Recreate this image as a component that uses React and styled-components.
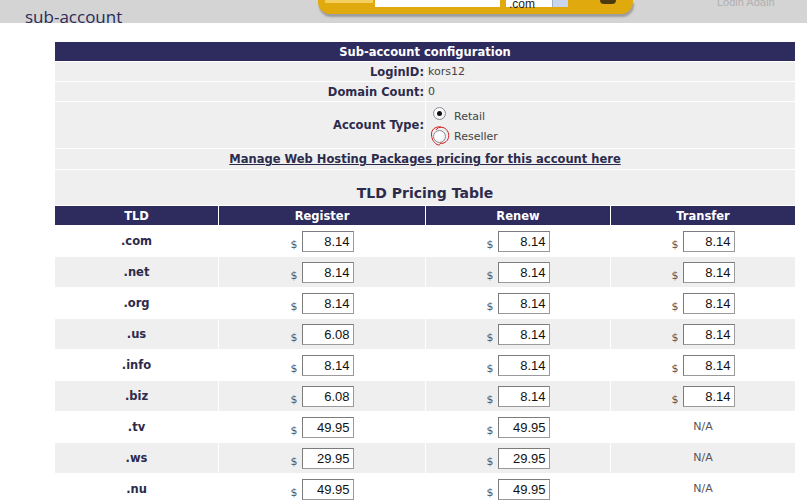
import React from "react";
import styled, { createGlobalStyle } from "styled-components";

const GlobalStyle = createGlobalStyle`
  html, body {
    margin: 0;
    padding: 0;
    overflow: hidden;
    background: #ffffff;
  }
  body {
    font-family: "DejaVu Sans", Verdana, sans-serif;
  }
`;

const TopBar = styled.div`
  height: 23px;
  background: #d4d4d4;
  display: grid;
  grid-template-columns: 318px 315px 1fr;
  align-items: start;
`;

const PageTitle = styled.div`
  padding-left: 25px;
  height: 23px;
  font-family: "Open Sans", "DejaVu Sans", sans-serif;
  font-size: 17px;
  line-height: 33px;
  color: #2b2a5a;
  white-space: nowrap;
`;

const SearchPill = styled.div`
  height: 14px;
  background: #e0a90e;
  border-radius: 0 0 12px 12px;
  box-shadow: 1px 3px 2px rgba(90, 90, 90, 0.45);
  display: flex;
  align-items: flex-end;
  padding: 0 0 7px 7px;
  box-sizing: border-box;
  overflow: hidden;
`;

const PillLabel = styled.span`
  width: 48px;
  height: 3px;
  background: #f3cf60;
  align-self: flex-start;
  margin-right: 2px;
`;

const PillInput = styled.div`
  width: 125px;
  height: 18px;
  background: #ffffff;
  flex: none;
`;

const PillSelect = styled.div`
  margin-left: 6px;
  width: 62px;
  height: 18px;
  background: #ffffff;
  display: flex;
  align-items: flex-end;
  font-family: "Liberation Sans", Arial, sans-serif;
  font-size: 12px;
  line-height: 12px;
  color: #222;
  flex: none;
  span {
    flex: 1;
    padding-left: 3px;
    margin-bottom: -3px;
  }
  i {
    width: 15px;
    height: 18px;
    background: #c9d5ea;
    border-left: 1px solid #9fb0cc;
  }
`;

const PillButton = styled.div`
  margin-left: 32px;
  width: 16px;
  height: 4px;
  align-self: flex-start;
  border-radius: 0 0 8px 8px;
  background: #4a3a10;
`;

const TopLinks = styled.div`
  padding-left: 84px;
  height: 6px;
  overflow: hidden;
  font-family: "Liberation Sans", Arial, sans-serif;
  font-size: 11px;
  line-height: 4px;
  color: #b0b0b0;
  white-space: nowrap;
`;

const Content = styled.div`
  padding: 18px 0 0 54px;
`;

const Grid = styled.table`
  width: 742px;
  border-collapse: separate;
  border-spacing: 1px;
  table-layout: fixed;
`;

const HeadCell = styled.th`
  background: #2e2b5f;
  color: #ffffff;
  font-size: 11.5px;
  font-weight: bold;
  height: 19px;
  padding: 0;
  text-align: center;
  vertical-align: middle;
`;

const Label = styled.td`
  background: #efefef;
  text-align: right;
  font-size: 11.5px;
  font-weight: bold;
  color: #2c2b4c;
  height: ${(p) => p.h || 19}px;
  padding: 0 1px 0 0;
  vertical-align: middle;
`;

const Value = styled.td`
  background: #efefef;
  font-size: 11px;
  color: #444;
  padding: 0 0 0 2px;
  vertical-align: middle;
`;

const TitleCell = styled.td`
  background: #efefef;
  height: ${(p) => p.h || 20}px;
  text-align: center;
  vertical-align: ${(p) => p.valign || "middle"};
  padding: 0 0 ${(p) => p.pb || 0}px;
  font-size: ${(p) => p.size || 11.5}px;
  font-weight: bold;
  color: #2c2b4c;
  box-sizing: border-box;
`;

const ManageLink = styled.a`
  color: #2c2b4c;
  text-decoration: underline;
  cursor: pointer;
`;

const RadioList = styled.div`
  display: flex;
  flex-direction: column;
  gap: 6px;
  padding: 3px 0 0 5px;
`;

const RadioRow = styled.label`
  display: flex;
  align-items: center;
  gap: 8px;
  position: relative;
  font-size: 11px;
  color: #444;
  line-height: 14px;
`;

const RadioDot = styled.span`
  width: 11px;
  height: 11px;
  border-radius: 50%;
  border: 1px solid #8a8f99;
  background: radial-gradient(circle at 40% 40%, #ffffff 30%, #e2e4e8 100%);
  display: flex;
  align-items: center;
  justify-content: center;
  margin-top: ${(p) => (p.checked ? -6 : 0)}px;
  &::after {
    content: "";
    width: 5px;
    height: 5px;
    border-radius: 50%;
    background: ${(p) => (p.checked ? "#111" : "transparent")};
  }
`;

const Scribble = styled.svg`
  position: absolute;
  left: -4px;
  top: -5px;
  pointer-events: none;
`;

const Row = styled.tr``;

const Cell = styled.td`
  background: ${(p) => (p.alt ? "#efefef" : "#ffffff")};
  height: 30px;
  box-sizing: border-box;
  padding: 0;
  text-align: center;
  vertical-align: middle;
  font-size: 11px;
  color: #555;
  line-height: 14px;
`;

const TldName = styled(Cell)`
  font-size: 11.5px;
  font-weight: bold;
  color: #2c2b4c;
`;

const PriceBox = styled.span`
  display: inline-flex;
  align-items: flex-end;
  vertical-align: middle;
`;

const Dollar = styled.span`
  font-size: 11px;
  line-height: 14px;
  color: #555;
  margin-right: 4px;
`;

const PriceInput = styled.input`
  width: 52px;
  height: 21px;
  box-sizing: border-box;
  border: 1px solid #9a9a9a;
  border-top-color: #7c7c7c;
  border-left-color: #7c7c7c;
  padding: 0 3px 0 0;
  text-align: right;
  font-family: "Liberation Sans", Arial, sans-serif;
  font-size: 13px;
  color: #111;
  background: #fff;
  margin: 0;
`;

const Price = ({ value }) =>
  value ? (
    <PriceBox>
      <Dollar>$</Dollar>
      <PriceInput defaultValue={value} />
    </PriceBox>
  ) : (
    "N/A"
  );

const pricing = [
  [".com", "8.14", "8.14", "8.14"],
  [".net", "8.14", "8.14", "8.14"],
  [".org", "8.14", "8.14", "8.14"],
  [".us", "6.08", "8.14", "8.14"],
  [".info", "8.14", "8.14", "8.14"],
  [".biz", "6.08", "8.14", "8.14"],
  [".tv", "49.95", "49.95", null],
  [".ws", "29.95", "29.95", null],
  [".nu", "49.95", "49.95", null],
];

export default function App() {
  return (
    <>
      <GlobalStyle />
      <TopBar>
        <PageTitle>sub-account</PageTitle>
        <SearchPill>
          <PillLabel />
          <PillInput />
          <PillSelect>
            <span>.com</span>
            <i />
          </PillSelect>
          <PillButton />
        </SearchPill>
        <TopLinks>Login Again</TopLinks>
      </TopBar>
      <Content>
        <Grid>
          <colgroup>
            <col style={{ width: 163 }} />
            <col style={{ width: 206 }} />
            <col style={{ width: 184 }} />
            <col style={{ width: 184 }} />
          </colgroup>
          <tbody>
            <tr>
              <HeadCell colSpan={4}>Sub-account configuration</HeadCell>
            </tr>
            <tr>
              <Label colSpan={2}>LoginID:</Label>
              <Value colSpan={2}>kors12</Value>
            </tr>
            <tr>
              <Label colSpan={2}>Domain Count:</Label>
              <Value colSpan={2}>0</Value>
            </tr>
            <tr>
              <Label colSpan={2} h={46}>
                Account Type:
              </Label>
              <Value colSpan={2}>
                <RadioList>
                  <RadioRow>
                    <RadioDot checked />
                    Retail
                  </RadioRow>
                  <RadioRow>
                    <RadioDot />
                    Reseller
                    <Scribble width="22" height="22" viewBox="0 0 22 22">
                      <path
                        d="M12 2 C6 1 2 5 2.5 10 C3 14 4 17 8 19.5 C10 20.5 11 20 11.5 18 C13 19 17 18 19 14 C21 10 19 4 14 2.5 C11 1.5 8 3 7 5"
                        fill="none"
                        stroke="#d42020"
                        strokeWidth="1"
                      />
                    </Scribble>
                  </RadioRow>
                </RadioList>
              </Value>
            </tr>
            <tr>
              <TitleCell colSpan={4}>
                <ManageLink>Manage Web Hosting Packages pricing for this account here</ManageLink>
              </TitleCell>
            </tr>
            <tr>
              <TitleCell colSpan={4} h={35} size={14} valign="bottom" pb={4}>
                TLD Pricing Table
              </TitleCell>
            </tr>
            <tr>
              <HeadCell>TLD</HeadCell>
              <HeadCell>Register</HeadCell>
              <HeadCell>Renew</HeadCell>
              <HeadCell>Transfer</HeadCell>
            </tr>
            {pricing.map(([tld, reg, ren, tra], i) => (
              <Row key={tld}>
                <TldName alt={i % 2 === 1}>{tld}</TldName>
                <Cell alt={i % 2 === 1}>
                  <Price value={reg} />
                </Cell>
                <Cell alt={i % 2 === 1}>
                  <Price value={ren} />
                </Cell>
                <Cell alt={i % 2 === 1}>
                  <Price value={tra} />
                </Cell>
              </Row>
            ))}
          </tbody>
        </Grid>
      </Content>
    </>
  );
}
